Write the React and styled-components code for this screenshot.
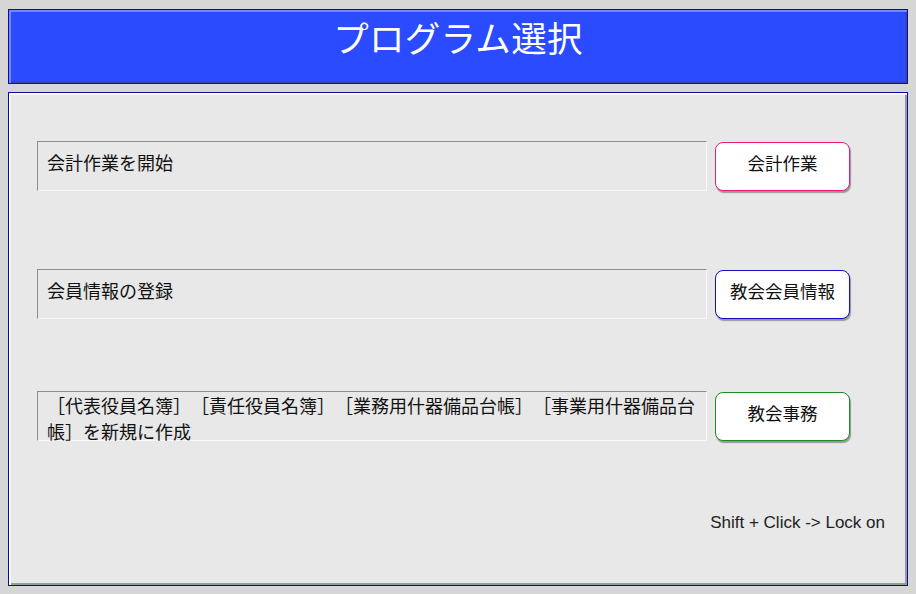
import React from 'react';
import styled, { createGlobalStyle } from 'styled-components';

const GlobalStyle = createGlobalStyle`
  html, body {
    margin: 0;
    padding: 0;
    background: #d6d6d6;
  }
  body {
    font-family: "Liberation Sans", "Noto Sans CJK JP", sans-serif;
  }
  * {
    box-sizing: border-box;
  }
`;

const Page = styled.div`
  width: 916px;
  height: 594px;
  padding: 9px 8px 0 8px;
  display: flex;
  flex-direction: column;
  gap: 8px;
`;

const Header = styled.header`
  width: 900px;
  height: 75px;
  background: #2a4bff;
  border: 1px solid #10108a;
  box-shadow: inset 2px 2px 0 #6f88ff, inset -2px -2px 0 #3546b4;
  display: flex;
  align-items: center;
  justify-content: center;
  padding-bottom: 20px;

  h1 {
    margin: 0;
    color: #ffffff;
    font-family: "Noto Sans CJK JP", sans-serif;
    font-weight: 400;
    font-size: 35.5px;
    letter-spacing: 0.3px;
  }
`;

const Panel = styled.main`
  width: 900px;
  height: 494px;
  background: #e8e8e8;
  border: 1px solid #0a0aa8;
  box-shadow: inset 2px 2px 0 #fafafa, inset -2px -2px 0 #9a9a9a;
  padding: 48px 22px 0 28px;
  display: flex;
  flex-direction: column;
`;

const Row = styled.div`
  display: flex;
  align-items: flex-start;
  gap: 8px;
  margin-top: ${p => p.$top || 0}px;
`;

const Field = styled.div`
  width: 670px;
  height: 50px;
  border-top: 1px solid #8c8c8c;
  border-left: 1px solid #8c8c8c;
  border-bottom: 1px solid #f8f8f8;
  border-right: 1px solid #f8f8f8;
  padding: ${p => p.$padTop}px 8px 0 9px;
  font-family: "Noto Sans CJK JP", sans-serif;
  font-size: 18px;
  line-height: 26px;
  color: #111;
  text-spacing-trim: space-all;
`;

const ActionButton = styled.button`
  width: 135px;
  height: 49px;
  margin-top: 1px;
  background: #ffffff;
  border: 1.5px solid ${p => p.$color};
  border-radius: 8px;
  box-shadow: 1px 2px 1px rgba(0, 0, 0, 0.35);
  font-family: "Noto Sans CJK JP", sans-serif;
  font-size: 17.5px;
  color: #111;
  cursor: pointer;
  padding: 0 0 8px 0;
`;

const Hint = styled.div`
  margin-top: 72px;
  align-self: flex-end;
  font-family: "Liberation Sans", sans-serif;
  font-size: 17px;
  color: #222;
`;

const rows = [
  { text: '会計作業を開始', label: '会計作業', color: '#e8197f', top: 0, pad: 7 },
  { text: '会員情報の登録', label: '教会会員情報', color: '#1010c8', top: 78, pad: 7 },
  {
    text: '［代表役員名簿］［責任役員名簿］［業務用什器備品台帳］［事業用什器備品台帳］を新規に作成',
    label: '教会事務',
    color: '#1f8a1f',
    top: 72,
    pad: 0
  }
];

const App = () => {
  return (
    <>
      <GlobalStyle />
      <Page>
        <Header>
          <h1>プログラム選択</h1>
        </Header>
        <Panel>
          {rows.map((row, index) => (
            <Row key={index} $top={row.top}>
              <Field $padTop={row.pad}>{row.text}</Field>
              <ActionButton $color={row.color}>{row.label}</ActionButton>
            </Row>
          ))}
          <Hint>Shift + Click -&gt; Lock on</Hint>
        </Panel>
      </Page>
    </>
  );
};

export default App;
